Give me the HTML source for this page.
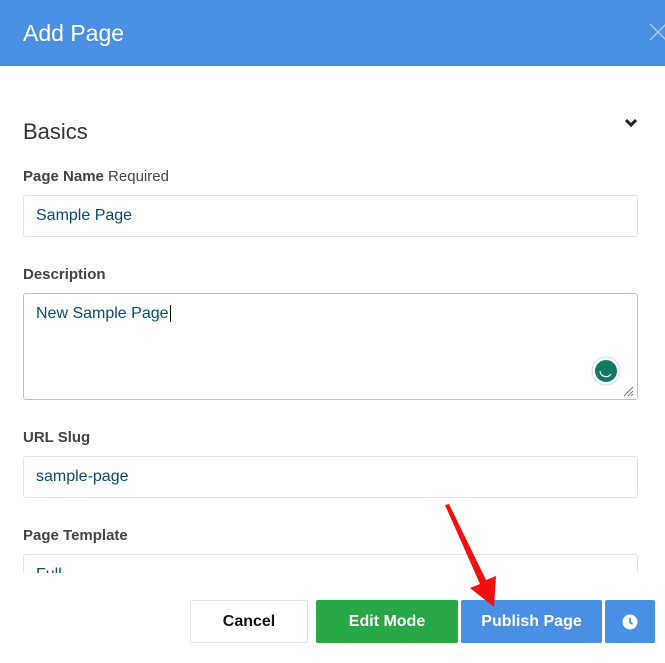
<!DOCTYPE html>
<html><head><style>
body{margin:0;width:665px;height:663px;background:#fff;font-family:"Liberation Sans",sans-serif;position:relative;overflow:hidden}
.hd{position:absolute;left:0;top:0;width:665px;height:66px;background:#4a90e2}
.hd span{position:absolute;left:23px;top:20px;font-size:23px;color:#fff}
.abs{position:absolute}
.lbl{position:absolute;left:23px;font-size:15px;color:#444;font-weight:bold}
.inp{position:absolute;left:23px;width:613px;border:1px solid #e3e3e3;border-radius:3px;background:#fff;font-size:16px;color:#0b4b6b}
.inp span{position:absolute;left:12px;top:11px}
.btn{position:absolute;top:600px;height:43px;display:flex;align-items:center;justify-content:center;font-weight:bold;font-size:16px;color:#fff;border-radius:2px}
</style></head><body>
<div class="hd"><span>Add Page</span>
<svg class="abs" style="left:648px;top:22px" width="20" height="20"><path d="M2 2L18 18M18 2L2 18" stroke="#a9c8ef" stroke-width="1.5"/></svg></div>
<div class="abs" style="left:23px;top:119px;font-size:22px;color:#333">Basics</div>
<svg class="abs" style="left:624px;top:117px" width="14" height="12"><path d="M2 3L7 8L12 3" stroke="#222" stroke-width="3" fill="none"/></svg>
<div class="lbl" style="top:168px">Page Name <span style="font-weight:normal">Required</span></div>
<div class="inp" style="top:195px;height:40px"><span>Sample Page</span></div>
<div class="lbl" style="top:266px">Description</div>
<div class="inp" style="top:293px;height:105px;border-color:#b4c6dc"><span>New Sample Page<span style="position:static;border-left:1px solid #000;margin-left:1px"></span></span>
<svg class="abs" style="left:567px;top:62px" width="30" height="30"><circle cx="15" cy="15" r="14" fill="#fff" stroke="#ddd"/><circle cx="15" cy="15" r="11" fill="#0e7a62"/><path d="M9 15a6 6 0 0 0 11 3" stroke="#fff" fill="none" stroke-width="1.2"/></svg>
<svg class="abs" style="left:598px;top:91px" width="12" height="12"><path d="M2 11L11 2M6 11L11 6M9 11L11 9" stroke="#777"/></svg></div>
<div class="lbl" style="top:429px">URL Slug</div>
<div class="inp" style="top:456px;height:40px"><span>sample-page</span></div>
<div class="lbl" style="top:527px">Page Template</div>
<div class="inp" style="top:554px;height:40px;border-bottom:none"><span>Full</span></div>
<div class="abs" style="left:0;top:573px;width:665px;height:90px;background:#fff"></div>
<div class="btn" style="left:190px;width:116px;border:1px solid #e3e3e3;height:41px;color:#111">Cancel</div>
<div class="btn" style="left:316px;width:142px;background:#28a745">Edit Mode</div>
<div class="btn" style="left:461px;width:141px;background:#4a90e2">Publish Page</div>
<div class="btn" style="left:605px;width:50px;background:#4a90e2"><svg width="16" height="16"><circle cx="8" cy="8" r="7.5" fill="#fff"/><path d="M8 4V8.5L10.5 10" stroke="#4a90e2" stroke-width="1.8" fill="none"/></svg></div>
<svg class="abs" style="left:440px;top:500px" width="70" height="112"><path d="M5 5L9 4L46 80L56 76L54 107L30 88L40 84Z" fill="#f01010"/></svg>
</body></html>
